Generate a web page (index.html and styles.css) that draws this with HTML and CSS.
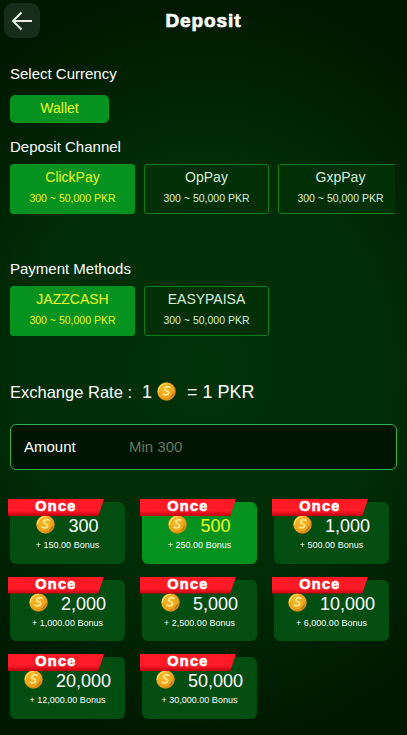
FILE: index.html
```html
<!DOCTYPE html>
<html lang="en">

<head>
    <meta charset="UTF-8">
    <meta name="viewport" content="width=device-width, initial-scale=1.0">
    <title>Deposit</title>
    <link rel="stylesheet" href="styles.css">
</head>

<body>
    <svg class="defs" width="0" height="0">
        <defs>
            <radialGradient id="coin-fill" cx="40%" cy="35%" r="70%">
                <stop offset="0" stop-color="#f7b92a" />
                <stop offset="0.7" stop-color="#eda31c" />
                <stop offset="1" stop-color="#c47c10" />
            </radialGradient>
            <symbol id="coin" viewBox="0 0 20 20">
                <circle cx="10" cy="10" r="9.700" fill="url(#coin-fill)" />
                <path d="M1.500 9.500C2 5 5.500 1.800 10 1.600" fill="none" stroke="#ffdf5e" stroke-width="1.300" stroke-linecap="round" />
                <path d="M13.600 5.600c-2.200-1.200-5.400-.4-5.500 1.700-.1 2.400 4.400 1.700 4.200 4.100-.2 2.100-3.200 2.700-5.600 1.500" fill="none" stroke="#ffe88a" stroke-width="1.900" stroke-linecap="round" />
                <path d="M14.500 16.200c1.200-.9 2-2.200 2.400-3.700" fill="none" stroke="#b8720c" stroke-width="1.200" stroke-linecap="round" />
            </symbol>
        </defs>
    </svg>

    <header class="topbar">
        <a class="back" href="#">
            <svg width="22" height="20" viewBox="0 0 22 20">
                <path d="M21 10H2M10.500 1.500 2 10l8.500 8.500" fill="none" stroke="#e6f0e6" stroke-width="2" />
            </svg>
        </a>
        <h1>Deposit</h1>
    </header>

    <main>
        <h2 class="label label-currency">Select Currency</h2>
        <button class="wallet">Wallet</button>

        <h2 class="label label-channel">Deposit Channel</h2>
        <div class="options options-scroll">
            <div class="option active"><span>ClickPay</span><small>300 ~ 50,000 PKR</small></div>
            <div class="option"><span>OpPay</span><small>300 ~ 50,000 PKR</small></div>
            <div class="option"><span>GxpPay</span><small>300 ~ 50,000 PKR</small></div>
        </div>

        <h2 class="label label-method">Payment Methods</h2>
        <div class="options">
            <div class="option active"><span>JAZZCASH</span><small>300 ~ 50,000 PKR</small></div>
            <div class="option"><span>EASYPAISA</span><small>300 ~ 50,000 PKR</small></div>
        </div>

        <p class="rate">
            <span class="rate-title">Exchange Rate :</span>
            <span>1</span>
            <svg class="coin-rate"><use href="#coin" /></svg>
            <span>= 1 PKR</span>
        </p>

        <div class="amount">
            <label for="amount">Amount</label>
            <input id="amount" type="text" placeholder="Min 300">
        </div>

        <div class="bonus-grid">
            <div class="bonus">
                <div class="once">Once</div>
                <div class="value"><svg class="coin"><use href="#coin" /></svg><b>300</b></div>
                <small>+ 150.00 Bonus</small>
            </div>
            <div class="bonus active">
                <div class="once">Once</div>
                <div class="value"><svg class="coin"><use href="#coin" /></svg><b>500</b></div>
                <small>+ 250.00 Bonus</small>
            </div>
            <div class="bonus">
                <div class="once">Once</div>
                <div class="value"><svg class="coin"><use href="#coin" /></svg><b>1,000</b></div>
                <small>+ 500.00 Bonus</small>
            </div>
            <div class="bonus">
                <div class="once">Once</div>
                <div class="value"><svg class="coin"><use href="#coin" /></svg><b>2,000</b></div>
                <small>+ 1,000.00 Bonus</small>
            </div>
            <div class="bonus">
                <div class="once">Once</div>
                <div class="value"><svg class="coin"><use href="#coin" /></svg><b>5,000</b></div>
                <small>+ 2,500.00 Bonus</small>
            </div>
            <div class="bonus">
                <div class="once">Once</div>
                <div class="value"><svg class="coin"><use href="#coin" /></svg><b>10,000</b></div>
                <small>+ 6,000.00 Bonus</small>
            </div>
            <div class="bonus">
                <div class="once">Once</div>
                <div class="value"><svg class="coin"><use href="#coin" /></svg><b>20,000</b></div>
                <small>+ 12,000.00 Bonus</small>
            </div>
            <div class="bonus">
                <div class="once">Once</div>
                <div class="value"><svg class="coin"><use href="#coin" /></svg><b>50,000</b></div>
                <small>+ 30,000.00 Bonus</small>
            </div>
        </div>
    </main>
</body>

</html>
```

FILE: styles.css
```css
html {
    font-family: "Liberation Sans", Arial, Helvetica, sans-serif;
    color: #fff;
}

body {
    margin: 0;
    width: 407px;
    height: 735px;
    overflow: hidden;
    background-color: #001800;
    background-image: radial-gradient(ellipse 340px 380px at 50% 50%, #003208 0%, #002c06 55%, rgba(0, 24, 0, 0) 100%);
}

.defs {
    position: absolute;
}

/* Top bar */

.topbar {
    display: flex;
    align-items: center;
    justify-content: center;
    position: relative;
    height: 41px;
}

.topbar h1 {
    margin: 0;
    font-size: 19px;
    font-weight: 700;
    letter-spacing: .9px;
    -webkit-text-stroke: .7px #fff;
}

.back {
    position: absolute;
    left: 4px;
    top: 3px;
    width: 36px;
    height: 35px;
    display: flex;
    align-items: center;
    justify-content: center;
    background: #182c1a;
    border-radius: 9px;
}

main {
    padding: 0 10px;
}

/* Section labels */

.label {
    margin: 0;
    font-size: 15px;
    font-weight: 400;
    line-height: 18px;
}

.label-currency {
    margin-top: 24px;
}

.label-channel {
    margin-top: 15px;
}

.label-method {
    margin-top: 46px;
}

.wallet {
    display: block;
    width: 99px;
    height: 28px;
    margin-top: 12px;
    padding: 0 0 2px;
    border: 0;
    border-radius: 5px;
    background: #05921f;
    color: #ecff1c;
    font: 14px "Liberation Sans", Arial, sans-serif;
}

/* Channel and method cards */

.options {
    display: flex;
    gap: 9px;
    margin-top: 8px;
}

.options-scroll {
    width: 385px;
    overflow: hidden;
}

.option {
    flex: 0 0 125px;
    height: 50px;
    box-sizing: border-box;
    border: 1px solid #0b7f20;
    border-radius: 3px;
    background: #012f06;
    text-align: center;
    color: #d8f0d8;
}

.option span {
    display: block;
    margin-top: 4px;
    font-size: 14px;
    line-height: 17px;
}

.option small {
    display: block;
    margin-top: 5px;
    font-size: 10.500px;
    line-height: 14px;
}

.option.active {
    background: #05921f;
    border-color: #05921f;
    color: #ecff1c;
}

/* Exchange rate */

.rate {
    display: flex;
    align-items: center;
    margin: 45px 0 0;
    height: 22px;
    font-size: 18px;
}

.rate-title {
    margin-right: 10px;
    font-size: 16.500px;
}

.coin-rate {
    width: 19px;
    height: 19px;
    margin: -2px 11px 0 5px;
}

/* Amount field */

.amount {
    display: flex;
    align-items: center;
    height: 46px;
    width: 387px;
    box-sizing: border-box;
    margin-top: 21px;
    padding: 0 0 2px 13px;
    border: 1px solid #2fb14c;
    border-radius: 6px;
    background: #001500;
}

.amount label {
    width: 105px;
    font-size: 15px;
}

.amount input {
    flex: 1;
    min-width: 0;
    padding: 0;
    border: 0;
    outline: 0;
    background: none;
    color: #fff;
    font: 15px "Liberation Sans", Arial, sans-serif;
}

.amount input::placeholder {
    color: #62785f;
    opacity: 1;
}

/* Bonus grid */

.bonus-grid {
    display: grid;
    grid-template-columns: repeat(3, 115px);
    grid-auto-rows: 61.500px;
    column-gap: 17px;
    row-gap: 16px;
    margin-top: 32px;
}

.bonus {
    position: relative;
    border-radius: 6px;
    background: #024d10;
    text-align: center;
}

.bonus .value {
    display: flex;
    align-items: center;
    justify-content: center;
    height: 22px;
    margin-top: 13px;
}

.bonus b {
    margin-left: 13px;
    font-size: 18px;
    font-weight: 400;
    line-height: 22px;
}

.coin {
    width: 19px;
    height: 19px;
    margin-top: -3px;
}

.bonus small {
    display: block;
    margin-top: 2px;
    font-size: 9px;
    line-height: 12px;
}

.bonus.active {
    background: #05921f;
}

.bonus.active b {
    color: #ecff1c;
}

.once {
    position: absolute;
    left: -2px;
    top: -3px;
    width: 96px;
    height: 17px;
    background: linear-gradient(#ff1a26 70%, #c00010);
    clip-path: polygon(0 0, 100% 0, 94% 100%, 0 100%);
    font-size: 14.500px;
    font-weight: 700;
    line-height: 14px;
    letter-spacing: 1.300px;
    -webkit-text-stroke: .6px #fff;
    text-align: center;
}
```
